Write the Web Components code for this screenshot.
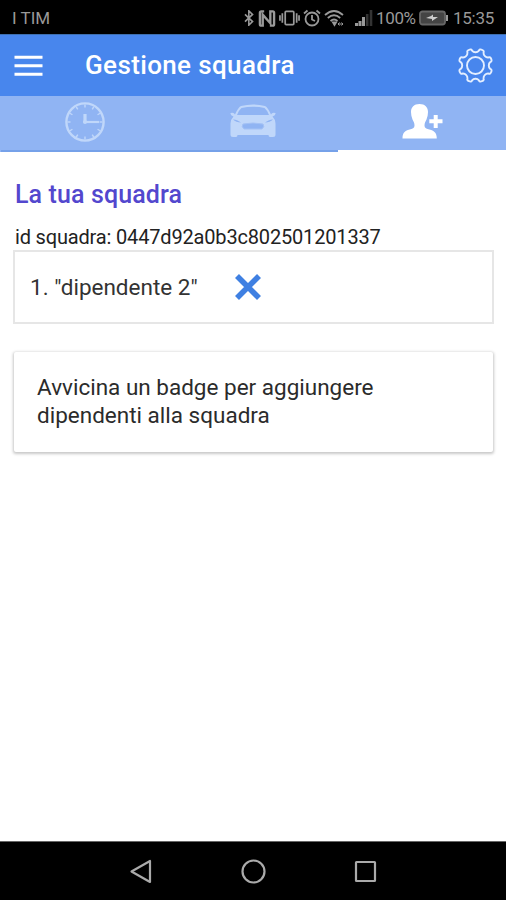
<!DOCTYPE html>
<html lang="it">
<head>
<meta charset="utf-8">
<title>Gestione squadra</title>
<style>
html,body{margin:0;height:100%}
body{font-family:Roboto,"Liberation Sans",sans-serif;background:#fff;overflow:hidden}
</style>
</head>
<body>
<team-app></team-app>
<script>
const define = (name, html) => {
  const t = document.createElement('template');
  t.innerHTML = '<style>*{box-sizing:border-box}svg{display:block;flex:none}</style>' + html;
  customElements.define(name, class extends HTMLElement {
    constructor() {
      super();
      this.attachShadow({mode: 'open'}).append(t.content.cloneNode(true));
    }
  });
};

// Eight rounded teeth separated by concave notches
const gearPath = () => {
  const p = (r, a) => (r * Math.sin(a * Math.PI / 180)).toFixed(2) + ' ' + (-r * Math.cos(a * Math.PI / 180)).toFixed(2);
  let d = 'M' + p(13.3, 0);
  for (let k = 0; k < 8; k++) {
    const a = k * 45;
    d += `Q${p(13.4, a + 9)} ${p(15.2, a + 13)}Q${p(17.3, a + 14)} ${p(17, a + 22.5)}Q${p(17.3, a + 31)} ${p(15.2, a + 32)}Q${p(13.4, a + 36)} ${p(13.3, a + 45)}`;
  }
  return d + 'Z';
};

// Tick marks around the clock face
const ticks = () => Array.from({length: 12}, (_, i) =>
  `<path d="M0-17.5V-14.5" transform="rotate(${i * 30})"/>`).join('');

define('status-bar', `<style>
:host{display:flex;align-items:center;height:34px;background:#000;color:#999;padding:2px 11px 0 12px;font-size:17px;line-height:20px;flex:none}
.carrier{flex:1;letter-spacing:0}
.pct{margin-left:3px;width:43px;letter-spacing:-.35px;white-space:nowrap}
.time{margin-left:5px;width:42px;letter-spacing:-.25px;white-space:nowrap}
svg{fill:none;stroke:#999;stroke-width:1.8}
</style>
<span class="carrier">I TIM</span>
<svg width="12" height="16" viewBox="0 0 12 18"><path d="M1.5 5 10 13 5.8 17V1L10 5 1.5 13"/></svg>
<svg width="18" height="17" viewBox="0 0 18 18" style="margin-left:3px"><path d="M6 1.5H3Q1.5 1.5 1.5 3V15Q1.5 16.5 3 16.5H4.5V5L12.5 14V1.5H15Q16.5 1.5 16.5 3V15Q16.5 16.5 15 16.5H12" stroke-width="2.5"/></svg>
<svg width="21" height="18" viewBox="0 0 22 18" style="margin-left:3px"><rect x="6.5" y="2" width="9" height="14" rx="1"/><path d="M3.5 4V14M18.5 4V14M1 6V12M21 6V12"/></svg>
<svg width="18" height="18" viewBox="0 0 18 18" style="margin-left:3px"><circle cx="9" cy="10" r="6.5"/><path d="M9 6V10.5L12 12M1 4.5 4.5 1.5M13.5 1.5 17 4.5"/></svg>
<svg width="20" height="18" viewBox="0 0 20 18" style="margin-left:3px"><path d="M1 6Q10-2 19 6M3.8 9Q10 3.5 16.2 9M6.500 12Q10 9 13.500 12"/><path d="M9 13.500H12L10.500 16Z" fill="#999"/><path d="M14 15H19M15.500 13.500 14 15 15.500 16.500M17.500 13.500 19 15 17.500 16.500" stroke-width="1"/></svg>
<svg width="19" height="18" viewBox="0 0 19 18" style="margin-left:10px"><path d="M2.5 14V17M6 12V17M9.5 8V17" stroke-width="3"/><path d="M13.2 5V17M17 1V17" stroke="#333" stroke-width="2.6"/></svg>
<span class="pct">100%</span>
<svg width="29" height="16" viewBox="0 0 29 16"><rect x="1" y="1.5" width="25" height="13" rx="2.5" fill="#444" stroke="#666"/><path d="M28 5V11" stroke-width="2"/><path d="M7 8 12 6 14 4.5V7H19L14.5 10 13 11V9Z" fill="#ccc" stroke="none"/></svg>
<span class="time">15:35</span>`);

define('app-header', `<style>
:host{display:flex;align-items:center;height:62px;background:#4886ed;color:#fff;padding:0 12px 0 14px;flex:none;border-top:1px solid #3e6faf}
h1{margin:-2px 0 0 42px;flex:1;font-size:26px;font-weight:500;line-height:32px;letter-spacing:.37px;white-space:nowrap}
</style>
<svg width="29" height="24" viewBox="0 0 29 24"><path d="M.5 3.2H28.5M.5 11.8H28.5M.5 20.3H28.5" stroke="#fff" stroke-width="3"/></svg>
<h1>Gestione squadra</h1>
<svg width="37" height="37" viewBox="-18.5 -18.5 37 37" fill="none" stroke="#e3eeff" stroke-width="1.9"><path d="${gearPath()}"/><circle r="8.5"/></svg>`);

define('tab-item', `<style>
:host{flex:1;display:flex;justify-content:center;height:56px;padding-top:5px;background:#90b4f3;border-bottom:2px solid #76a1e9;color:#c0d7fa}
:host([active]){color:#fff;border-bottom-color:#fff}
</style><slot></slot>`);

define('tab-bar', `<style>
:host{display:flex;flex:none;background:#90b4f3;padding-left:1px}
</style>
<tab-item><svg width="42" height="42" viewBox="-21 -21 42 42" fill="none" stroke="currentColor" stroke-width="2.4"><circle r="18.6"/><g stroke-width="1.4">${ticks()}</g><path d="M0-8V0" stroke-width="3.2"/><path d="M-1.5 0H14" stroke-width="2.2"/><circle r="2" fill="currentColor" stroke="none"/></svg></tab-item>
<tab-item><svg width="48" height="42" viewBox="0 -1.5 48 42"><path fill="currentColor" fill-rule="evenodd" d="M12 3.5Q24 .5 36 3.5Q39 5 42 12Q43 9.500 46.500 10.500Q47 13 43.500 14Q46.500 17 46.500 21V32Q46.500 34.500 44 34.500H41Q39.500 34.500 39.500 32.500H8.500Q8.500 34.500 7 34.500H4Q1.500 34.500 1.500 32V21Q1.500 17 4.500 14Q1 13 1.500 10.500Q5 9.500 6 12Q9 5 12 3.500ZM12.500 5.500Q9.500 8 8 12.500H40Q38.500 8 35.500 5.500Q24 3 12.500 5.500Z"/><path d="M14 21.500Q24 19.500 34 21.500Q36 24 33 26.500H15Q12 24 14 21.500Z" fill="#90b4f3" stroke="#a4c2f5"/><path d="M4 17Q7 16.500 12 20Q7 20 4 17M44 17Q41 16.500 36 20Q41 20 44 17" fill="#90b4f3"/></svg></tab-item>
<tab-item active><svg width="42" height="42" viewBox="0 0 42 42" fill="currentColor"><path d="M18.500 3C24 3 27 6.500 27 11C27 13.500 26.500 16 25.500 18.500C24.500 20.500 23.500 22 23.500 24.500C23.500 27 25 27.500 27.500 28.200C32.500 29.500 35.800 31 35.800 37.500H1.500C1.500 31 4.500 29.500 9.500 28.200C12 27.500 13.500 27 13.500 24.500C13.500 22 12.500 20.500 11.500 18.500C10.500 16 10 13.500 10 11C10 6.500 13 3 18.500 3Z"/><path d="M32.700 14H36.700V18.300H41.500V22.300H36.700V27H32.700V22.300H28.300V18.300H32.700Z"/></svg></tab-item>`);

define('team-member', `<style>
:host{display:flex;align-items:center;height:74px;border:2px solid #e6e6e6;padding:0 16px 0 15px;font-size:22.5px;color:#333;margin-top:1px}
span{width:204px;white-space:nowrap}
</style>
<span><slot></slot></span>
<svg width="28" height="28" viewBox="0 0 28 28" style="margin-top:-1px"><path d="M3 3 25 25M25 3 3 25" stroke="#3f80e2" stroke-width="5.6"/></svg>`);

define('info-card', `<style>
:host{display:block;height:100px;margin:28px 1px 0;padding:21px 22px 0 23px;border-radius:2px;background:#fff;box-shadow:0 1px 3px 1px rgba(0,0,0,.22);font-size:22.5px;line-height:28px;color:#2b2b2b}
</style><slot></slot>`);

define('team-page', `<style>
:host{display:block;flex:1;background:#fff;padding:28px 12px 0 13px}
h2{margin:0 0 0 2px;font-size:25px;font-weight:500;line-height:29px;letter-spacing:.12px;color:#5347ce;white-space:nowrap}
p{margin:16px 0 0 2px;font-size:20px;line-height:24px;letter-spacing:-.17px;color:#222;white-space:nowrap}
</style>
<h2>La tua squadra</h2>
<p>id squadra: 0447d92a0b3c802501201337</p>
<team-member>1. "dipendente 2"</team-member>
<info-card>Avvicina un badge per aggiungere<br>dipendenti alla squadra</info-card>`);

define('nav-bar', `<style>
:host{display:flex;justify-content:center;align-items:center;gap:85px;height:59px;background:#000;border-top:1px solid #666;flex:none}
svg{fill:none;stroke:#aaa;stroke-width:2.2}
</style>
<svg width="27" height="27" viewBox="0 0 27 27"><path d="M3.500 13.500 22 3V24Z" stroke-linejoin="round"/></svg>
<svg width="27" height="27" viewBox="0 0 27 27"><circle cx="13.500" cy="13.500" r="11"/></svg>
<svg width="27" height="27" viewBox="0 0 27 27"><rect x="4" y="4" width="19" height="19" rx=".5"/></svg>`);

define('team-app', `<style>
:host{display:flex;flex-direction:column;width:506px;height:900px}
</style>
<status-bar></status-bar><app-header></app-header><tab-bar></tab-bar><team-page></team-page><nav-bar></nav-bar>`);
</script>
</body>
</html>
